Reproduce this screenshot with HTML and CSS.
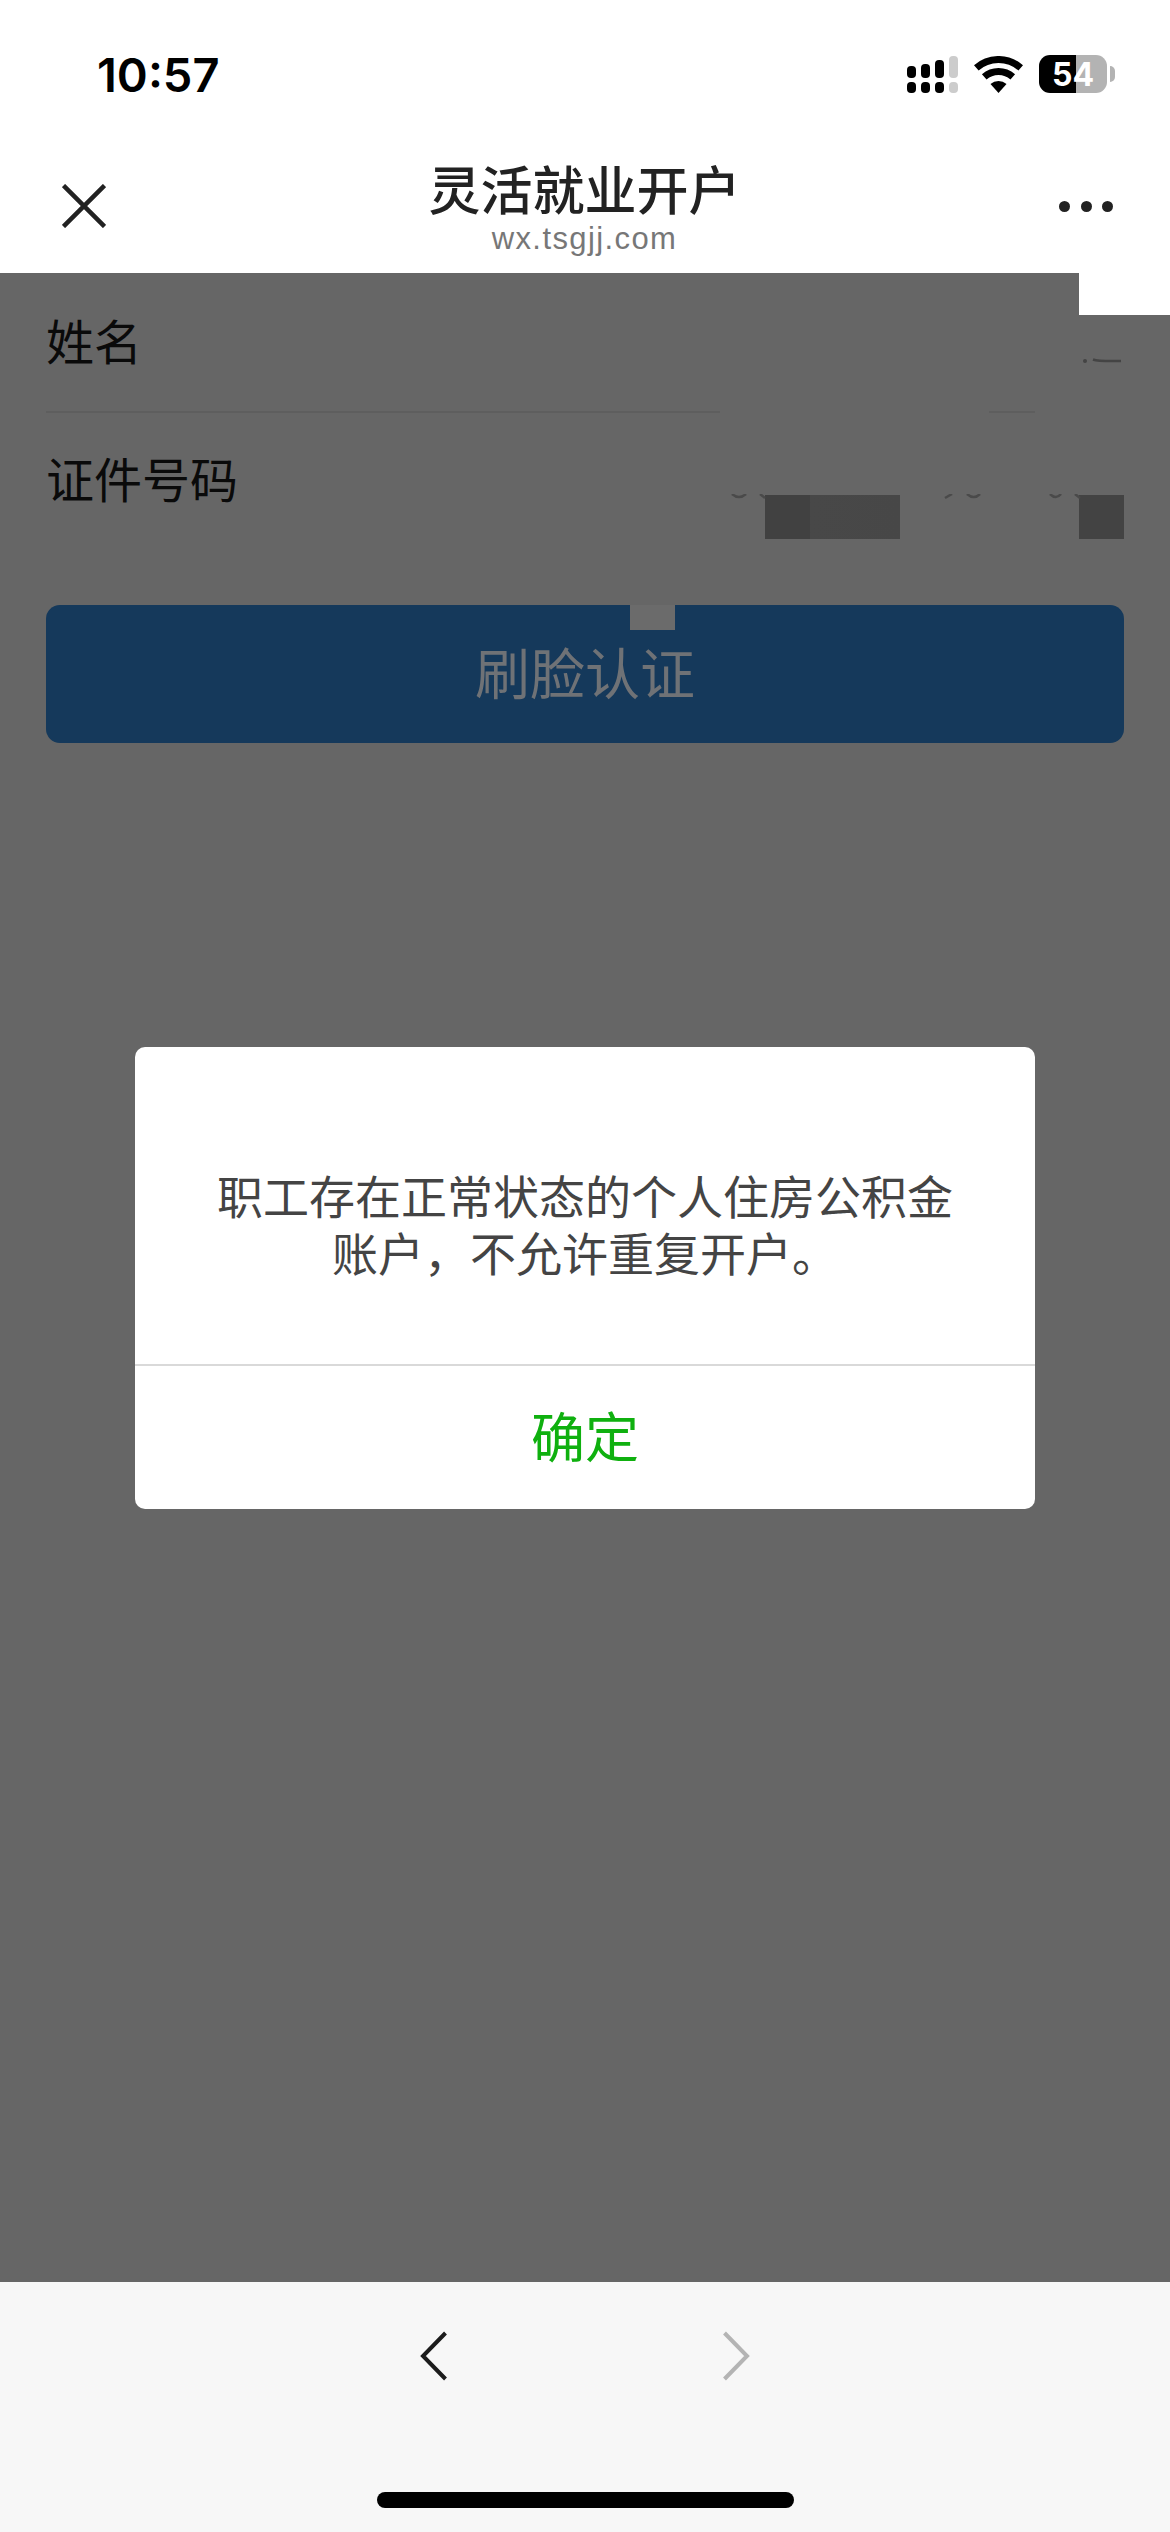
FILE: index.html
```html
<!DOCTYPE html>
<html lang="zh-CN">
<head>
    <meta charset="UTF-8">
    <meta name="viewport" content="width=device-width, initial-scale=1.0">
    <title>灵活就业开户</title>
    <link rel="stylesheet" href="styles.css">
</head>
<body>
    <div class="screen">
        <header class="top">
            <div class="status">
                <span class="time">10:57</span>
                <div class="status-icons">
                    <svg class="signal" width="51" height="38" viewBox="0 0 51 38">
                        <rect x="0" y="11" width="9" height="12" rx="4"/>
                        <rect x="0" y="27" width="9" height="11" rx="4"/>
                        <rect x="14" y="9" width="9" height="14" rx="4"/>
                        <rect x="14" y="27" width="9" height="11" rx="4"/>
                        <rect x="28" y="5" width="9" height="18" rx="4"/>
                        <rect x="28" y="27" width="9" height="11" rx="4"/>
                        <rect class="off" x="42" y="1" width="9" height="22" rx="4"/>
                        <rect class="off" x="42" y="27" width="9" height="11" rx="4"/>
                    </svg>
                    <svg class="wifi" width="49" height="37" viewBox="0 0 49 37">
                        <path d="M2.3 11.9A33.5 33.5 0 0 1 46.7 11.9" fill="none" stroke="#000" stroke-width="7"/>
                        <path d="M10.25 20.9A21.5 21.5 0 0 1 38.75 20.9" fill="none" stroke="#000" stroke-width="7"/>
                        <path d="M24.5 37L16.5 28A12 12 0 0 1 32.5 28Z"/>
                    </svg>
                    <div class="battery">
                        <div class="battery-body"><span>54</span></div>
                        <div class="battery-cap"></div>
                    </div>
                </div>
            </div>
            <nav class="nav">
                <svg class="close" width="44" height="44" viewBox="0 0 44 44">
                    <path d="M1.5 1.5L42.5 42.5M42.5 1.5L1.5 42.5" fill="none" stroke="#222" stroke-width="4.5"/>
                </svg>
                <div class="title">
                    <h1>灵活就业开户</h1>
                    <p>wx.tsgjj.com</p>
                </div>
                <div class="more"><i></i><i></i><i></i></div>
            </nav>
        </header>

        <main class="page">
            <div class="corner"></div>
            <div class="row row-name">
                <label>姓名</label>
                <svg class="name-mark" width="40" height="6" viewBox="0 0 40 6">
                    <circle cx="3" cy="3" r="2"/>
                    <path d="M11 1.5Q16 3.5 39 3" fill="none" stroke="#444" stroke-width="2.5"/>
                </svg>
            </div>
            <div class="rule">
                <span class="rule-a"></span>
                <span class="rule-b"></span>
            </div>
            <div class="row row-id">
                <label>证件号码</label>
                <svg class="id-marks" width="404" height="6" viewBox="0 0 404 6">
                    <path d="M12 0Q19 6 26 0M40 0L45 4M225 4L232 0M247 0Q254 6 260 0M330 0Q336 6 341 0M355 0L360 4" fill="none" stroke="#4a4a4a" stroke-width="2.5"/>
                </svg>
                <div class="mask-blocks">
                    <span class="block block-wide"></span>
                    <span class="block block-small"></span>
                </div>
            </div>
            <button class="face-btn" type="button">
                <span class="notch"></span>
                刷脸认证
            </button>

            <div class="dialog-wrap">
                <div class="dialog">
                    <div class="dialog-text">职工存在正常状态的个人住房公积金账户，不允许重复开户。</div>
                    <div class="dialog-ok">确定</div>
                </div>
            </div>
        </main>

        <footer class="toolbar">
            <div class="arrows">
                <svg width="27" height="50" viewBox="0 0 27 50">
                    <path d="M25.5 2L3 25L25.5 48" fill="none" stroke="#1c1c1c" stroke-width="4"/>
                </svg>
                <svg width="27" height="50" viewBox="0 0 27 50">
                    <path d="M1.5 2L24 25L1.5 48" fill="none" stroke="#b4b4b4" stroke-width="4"/>
                </svg>
            </div>
            <div class="home-bar"></div>
        </footer>
    </div>
</body>
</html>
```

FILE: styles.css
```css
* {
    box-sizing: border-box;
}
body {
    margin: 0;
    font-family: "Liberation Sans", "Noto Sans CJK SC", sans-serif;
    background: #fff;
}
.screen {
    width: 1170px;
    height: 2532px;
    display: flex;
    flex-direction: column;
    overflow: hidden;
}

/* status bar + webview title */
.top {
    height: 273px;
    background: #fff;
    flex: none;
}
.status {
    height: 148px;
    padding: 0 55px 0 97px;
    display: flex;
    justify-content: space-between;
    align-items: center;
}
.time {
    font-family: Inter, sans-serif;
    font-size: 47px;
    font-weight: 600;
    color: #000;
}
.status-icons {
    display: flex;
    align-items: center;
}
.signal {
    fill: #000;
    margin-right: 16px;
}
.signal .off {
    fill: #ccc;
}
.wifi {
    margin-right: 16px;
}
.battery {
    display: flex;
    align-items: center;
}
.battery-body {
    width: 68px;
    height: 38px;
    border-radius: 11px;
    background: linear-gradient(90deg, #000 0, #000 37px, #b3b3b3 37px);
    color: #fff;
    font-family: Inter, sans-serif;
    font-size: 32px;
    font-weight: 700;
    display: flex;
    align-items: center;
    justify-content: center;
}
.battery-cap {
    width: 5px;
    height: 16px;
    margin-left: 3px;
    border-radius: 0 5px 5px 0;
    background: #b3b3b3;
}
.nav {
    height: 125px;
    padding: 0 57px 0 62px;
    display: grid;
    grid-template-columns: 1fr auto 1fr;
    align-items: center;
}
.close {
    margin-bottom: 9px;
}
.title {
    text-align: center;
    margin-top: -5px;
    padding-right: 6px;
}
.title h1 {
    margin: 0;
    font-size: 52px;
    line-height: 62px;
    font-weight: 500;
    color: #222;
}
.title p {
    margin: 0;
    font-size: 31px;
    line-height: 32px;
    letter-spacing: 1.4px;
    color: #777;
}
.more {
    justify-self: end;
    display: flex;
    gap: 10.5px;
    margin-bottom: 8px;
}
.more i {
    width: 11px;
    height: 11px;
    border-radius: 50%;
    background: #222;
}

/* dimmed form underneath the dialog */
.page {
    position: relative;
    flex: 1;
    background: #666;
    padding: 0 46px;
}
.corner {
    position: absolute;
    top: 0;
    right: 0;
    width: 91px;
    height: 42px;
    background: #fff;
}
.row {
    display: flex;
    align-items: center;
    position: relative;
}
.row label {
    font-size: 48px;
    color: #0a0a0a;
    margin-top: -7px;
}
.row-name {
    height: 139px;
}
.name-mark {
    fill: #444;
    margin-left: auto;
    margin-right: 2px;
    align-self: flex-end;
    margin-bottom: 48px;
}
.rule {
    height: 2px;
    display: flex;
    margin-top: -1px;
}
.rule-a,
.rule-b {
    height: 2px;
    background: #5e5e5e;
}
.rule-a {
    width: 674px;
}
.rule-b {
    width: 46px;
    margin-left: 269px;
}
.row-id {
    height: 135px;
}
.id-marks {
    position: absolute;
    right: 0;
    top: 81px;
}
.mask-blocks {
    margin-left: auto;
    align-self: flex-end;
    margin-bottom: 9px;
    display: flex;
    gap: 179px;
}
.block {
    height: 44px;
    background: #434343;
}
.block-wide {
    width: 135px;
    background: linear-gradient(90deg, #414141 33%, #484848 33%, #474747);
}
.block-small {
    width: 45px;
}
.face-btn {
    position: relative;
    display: block;
    width: 100%;
    height: 138px;
    margin-top: 57px;
    padding: 0 0 9px;
    border: 0;
    border-radius: 14px;
    background: #15395b;
    color: #6f7276;
    font-family: inherit;
    font-size: 55px;
    overflow: hidden;
}
.notch {
    position: absolute;
    top: 0;
    left: 584px;
    width: 45px;
    height: 25px;
    background: #6b6b6b;
}
.dialog-wrap {
    position: absolute;
    top: 0;
    left: 0;
    right: 0;
    bottom: 0;
    display: flex;
    align-items: center;
    justify-content: center;
}
.dialog {
    width: 900px;
    height: 462px;
    background: #fff;
    border-radius: 10px;
    display: flex;
    flex-direction: column;
}
.dialog-text {
    height: 319px;
    padding: 44px 80px 0;
    display: flex;
    align-items: center;
    text-align: center;
    font-size: 46px;
    line-height: 57px;
    color: #444;
    border-bottom: 2px solid #d9d9d9;
}
.dialog-ok {
    flex: 1;
    display: flex;
    align-items: center;
    justify-content: center;
    padding-bottom: 6px;
    font-size: 54px;
    color: #0fb00f;
}

/* browser toolbar */
.toolbar {
    flex: none;
    height: 250px;
    background: #f7f7f7;
    padding-top: 49px;
}
.arrows {
    display: flex;
    justify-content: center;
    gap: 276px;
}
.arrows svg {
    display: block;
}
.home-bar {
    width: 417px;
    height: 16px;
    margin: 111px auto 0;
    border-radius: 8px;
    background: #000;
}
```
